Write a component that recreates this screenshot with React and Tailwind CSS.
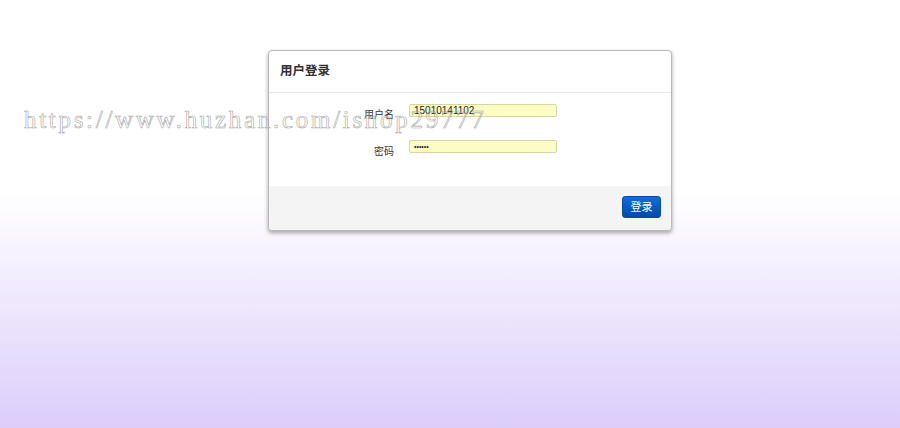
import { useState } from 'react';

export default function App() {
  const [username, setUsername] = useState('15010141102');
  const [password, setPassword] = useState('123456');

  return (
    <div className="relative h-[428px] w-full overflow-hidden bg-[linear-gradient(to_bottom,#ffffff_45%,#dccdfb_100%)] font-['Liberation_Sans','Noto_Sans_CJK_SC',sans-serif] pt-[50px]">
      {/* login panel */}
      <div className="ml-[268px] w-[404px] rounded-[4px] border border-[#b9b9b9] bg-white shadow-[0_2px_4px_rgba(0,0,0,0.35)]">
        <div className="flex h-[42px] items-center border-b border-[#e8e8e8] px-[11px]">
          <h3 className="text-[12.5px] font-bold text-[#333]">用户登录</h3>
        </div>

        <div className="flex flex-col gap-[23px] pt-[11px] pb-[33px]">
          <div className="flex h-[13px] items-start">
            <label className="mt-[4px] w-[125px] text-right text-[10px] leading-[13px] text-[#333]">用户名</label>
            <input
              value={username}
              onChange={(e) => setUsername(e.target.value)}
              className="ml-[15px] h-[13px] w-[148px] rounded-[2px] border border-[#d6d6a0] bg-[#fbfdc4] px-[4px] text-[10px] leading-[11px] text-[#222] outline-none"
            />
          </div>
          <div className="flex h-[13px] items-start">
            <label className="mt-[5px] w-[125px] text-right text-[10px] leading-[13px] text-[#333]">密码</label>
            <input
              type="password"
              value={password}
              onChange={(e) => setPassword(e.target.value)}
              className="ml-[15px] h-[13px] w-[148px] rounded-[2px] border border-[#d6d6a0] bg-[#fbfdc4] px-[4px] text-[7px] leading-[11px] text-[#222] outline-none"
            />
          </div>
        </div>

        <div className="flex h-[44px] items-start justify-end rounded-b-[4px] bg-[#f4f4f4] pt-[10px] pr-[10px]">
          <button className="h-[22px] w-[39px] rounded-[3px] border border-[#0a4aa0] bg-[linear-gradient(to_bottom,#0c6fd6,#0449a9)] text-[11px] text-white">
            登录
          </button>
        </div>
      </div>

      {/* watermark */}
      <div className="pointer-events-none absolute left-[24px] top-[101px] whitespace-nowrap font-['Liberation_Serif',serif] text-[25px] tracking-[2.7px] text-transparent [-webkit-text-stroke:0.6px_#a8a8a8]">
        https://www.huzhan.com/ishop29777
      </div>
    </div>
  );
}
